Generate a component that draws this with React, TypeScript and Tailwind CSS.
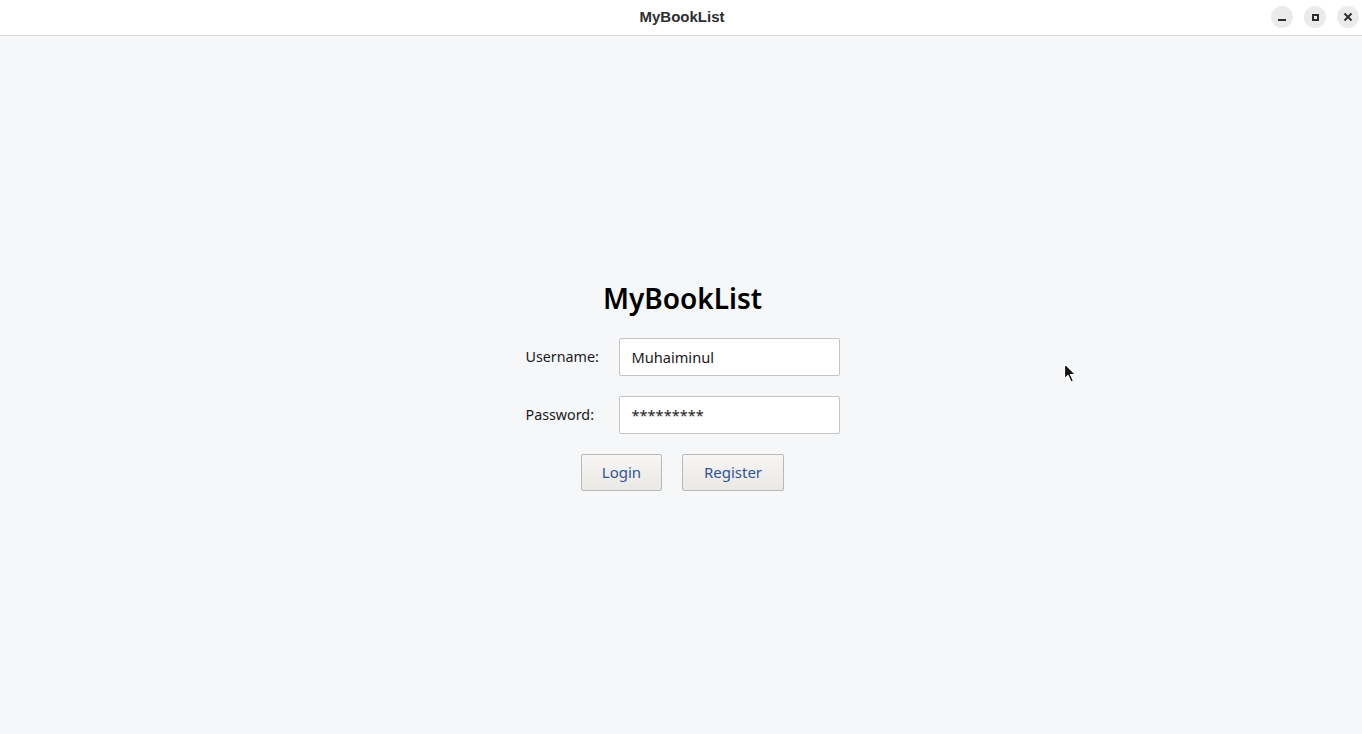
import { useState } from 'react';

function TitleBar() {
  return (
    <div className="relative flex h-[36px] shrink-0 items-center justify-center border-b border-[#dcdcdc] bg-white">
      <span className="pl-[2px] font-['Liberation_Sans',sans-serif] text-[15px] font-bold text-[#2e2e2e]">MyBookList</span>
      <div className="absolute right-[3px] top-[6px] flex gap-[11px]">
        <button className="flex h-[22px] w-[22px] items-center justify-center rounded-full bg-[#ebebeb]">
          <span className="mt-[5px] block h-[2px] w-[8px] bg-[#2e2e2e]" />
        </button>
        <button className="flex h-[22px] w-[22px] items-center justify-center rounded-full bg-[#ebebeb]">
          <span className="block h-[7px] w-[7px] border-2 border-[#2e2e2e]" />
        </button>
        <button className="flex h-[22px] w-[22px] items-center justify-center rounded-full bg-[#ebebeb]">
          <svg width="10" height="10" viewBox="0 0 10 10">
            <path d="M1.5 1.5 L8.5 8.5 M8.5 1.5 L1.5 8.5" stroke="#2e2e2e" strokeWidth="2" />
          </svg>
        </button>
      </div>
    </div>
  );
}

function Field({ label, value, type }: { label: string; value: string; type: string }) {
  const [v, setV] = useState(value);
  return (
    <>
      <label className="text-[14.3px] text-[#1a1a1a]">{label}</label>
      <input
        type="text"
        value={type === 'password' ? '*'.repeat(v.length) : v}
        onChange={(e) => setV(e.target.value)}
        className="h-[38px] w-[221px] rounded-[2px] border border-[#c4c4c4] bg-white px-[12px] text-[14.6px] text-[#1a1a1a] outline-none"
      />
    </>
  );
}

export default function App() {
  return (
    <div className="flex h-[734px] w-full flex-col bg-[#f6f7f9] font-['Noto_Sans',sans-serif]">
      <TitleBar />
      <main className="relative flex flex-1 items-center justify-center">
        <div className="flex flex-col items-center pl-[3px]">
          <h1 className="text-[28px] font-semibold leading-[38px] text-black">MyBookList</h1>
          <div className="mt-[21px] grid grid-cols-[73px_221px] items-center gap-x-[20px] gap-y-[20px]">
            <Field label="Username:" value="Muhaiminul" type="text" />
            <Field label="Password:" value="123456789" type="password" />
          </div>
          <div className="mt-[20px] flex gap-[20px]">
            <button className="h-[37px] w-[81px] rounded-[2px] border border-[#b8b8b8] bg-gradient-to-b from-[#f7f6f4] to-[#e9e8e5] text-[15px] text-[#2f5498]">
              Login
            </button>
            <button className="h-[37px] w-[102px] rounded-[2px] border border-[#b8b8b8] bg-gradient-to-b from-[#f7f6f4] to-[#e9e8e5] text-[15px] text-[#2f5498]">
              Register
            </button>
          </div>
        </div>
        <svg className="absolute left-[1063px] top-[326px]" width="14" height="22" viewBox="0 0 14 22">
          <path d="M1.5 1.5 L1.5 17 L5 13.5 L8 20 L10.5 19 L7.5 12.5 L12.5 12.5 Z" fill="#111" stroke="#fff" strokeWidth="1.2" strokeLinejoin="round" />
        </svg>
      </main>
    </div>
  );
}
